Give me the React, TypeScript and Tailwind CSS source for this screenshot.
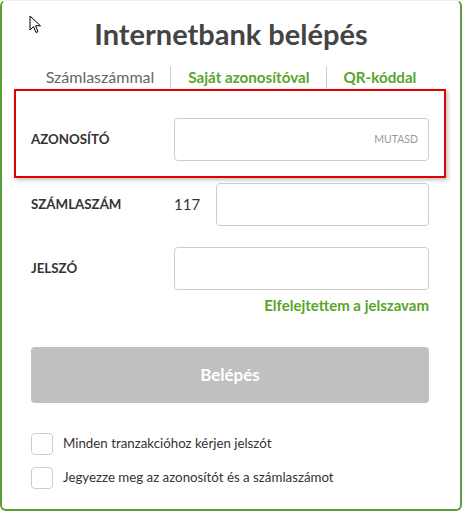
const font = { fontFamily: "Lato, 'Noto Sans', sans-serif" };

function Field({
  label,
  prefix,
  hint,
}: {
  label: string;
  prefix?: string;
  hint?: string;
}) {
  return (
    <div className="flex h-[43px] items-center">
      <div className="w-[143px] text-[13.3px] font-bold text-[#333]">{label}</div>
      {prefix && <div className="w-[42px] text-[15px] text-[#333]">{prefix}</div>}
      <div className="flex h-full flex-1 items-center justify-end rounded border border-[#ccc] bg-white px-[10px]">
        {hint && <span className="text-[10.5px] text-[#999]">{hint}</span>}
      </div>
    </div>
  );
}

function Check({ label }: { label: string }) {
  return (
    <label className="flex items-center gap-[10px]">
      <span className="h-[22px] w-[22px] rounded border border-[#ccc] bg-white" />
      <span className="text-[13.3px] text-[#333]">{label}</span>
    </label>
  );
}

export default function App() {
  return (
    <div style={font} className="h-[511px] w-[462px] overflow-hidden bg-white">
      <div className="relative h-[511px] rounded-md border-x-2 border-b-2 border-t border-[#5a9e3a] border-t-[#eeeeee] bg-white">
        <svg
          className="absolute left-[27px] top-[14px]"
          width="14"
          height="20"
          viewBox="0 0 14 20"
        >
          <path
            d="M1 1 L1 15 L4.5 11.5 L7 17.5 L9 16.6 L6.6 10.8 L11.5 10.8 Z"
            fill="white"
            stroke="black"
            strokeWidth="1"
            strokeLinejoin="miter"
          />
        </svg>

        <h1 className="pt-[15px] text-center text-[29px] font-bold leading-[36px] text-[#444]">
          Internetbank belépés
        </h1>

        <nav className="mt-[13px] flex items-center justify-center">
          <span className="pr-[16px] text-[16px] text-[#666]">Számlaszámmal</span>
          <span className="h-[22px] w-px bg-[#ccc]" />
          <span className="pl-[17px] pr-[16px] text-[15.2px] font-bold text-[#58a52b]">
            Saját azonosítóval
          </span>
          <span className="h-[22px] w-px bg-[#ccc]" />
          <span className="pl-[17px] text-[15.2px] font-bold text-[#58a52b]">QR-kóddal</span>
        </nav>

        <div className="ml-[12px] mr-[14px] mt-0 border-2 border-[#e00000] px-[15px] pb-[15px] pt-[27px] shadow-[2px_2px_4px_rgba(0,0,0,0.25)]">
          <Field label="AZONOSÍTÓ" hint="MUTASD" />
        </div>

        <div className="flex flex-col pl-[29px] pr-[31px]">
          <div className="mt-[5px]">
            <Field label="SZÁMLASZÁM" prefix="117" />
          </div>
          <div className="mt-[21px]">
            <Field label="JELSZÓ" />
          </div>
          <div className="mt-[4px] text-right text-[15px] font-bold text-[#58a52b]">
            Elfelejtettem a jelszavam
          </div>

          <button className="mt-[30px] h-[56px] w-full rounded bg-[#c0c0c0] text-[17px] font-bold text-white">
            Belépés
          </button>

          <div className="mt-[30px] flex flex-col gap-[12px]">
            <Check label="Minden tranzakcióhoz kérjen jelszót" />
            <Check label="Jegyezze meg az azonosítót és a számlaszámot" />
          </div>
        </div>
      </div>
    </div>
  );
}
